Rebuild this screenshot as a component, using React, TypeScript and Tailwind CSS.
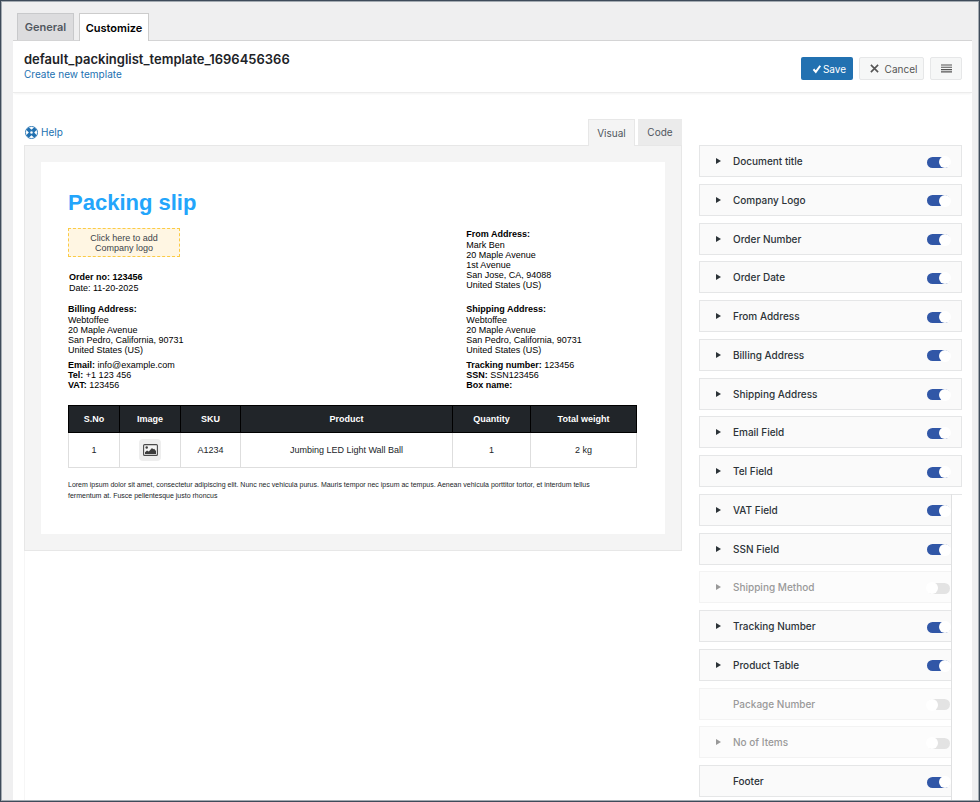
import { useState } from 'react';
import type { ReactNode } from 'react';

type Field = { name: string; enabled: boolean; expandable: boolean };

const FIELDS: Field[] = [
  { name: 'Document title', enabled: true, expandable: true },
  { name: 'Company Logo', enabled: true, expandable: true },
  { name: 'Order Number', enabled: true, expandable: true },
  { name: 'Order Date', enabled: true, expandable: true },
  { name: 'From Address', enabled: true, expandable: true },
  { name: 'Billing Address', enabled: true, expandable: true },
  { name: 'Shipping Address', enabled: true, expandable: true },
  { name: 'Email Field', enabled: true, expandable: true },
  { name: 'Tel Field', enabled: true, expandable: true },
  { name: 'VAT Field', enabled: true, expandable: true },
  { name: 'SSN Field', enabled: true, expandable: true },
  { name: 'Shipping Method', enabled: false, expandable: true },
  { name: 'Tracking Number', enabled: true, expandable: true },
  { name: 'Product Table', enabled: true, expandable: true },
  { name: 'Package Number', enabled: false, expandable: false },
  { name: 'No of Items', enabled: false, expandable: true },
  { name: 'Footer', enabled: true, expandable: false },
];

// Fields from this index on sit inside the narrower framed list.
const FRAME_START = 9;

function HelpIcon() {
  return (
    <svg viewBox="0 0 24 24" className="size-[13px]" aria-hidden="true">
      <circle cx="12" cy="12" r="11.2" fill="#fff" stroke="#2271b1" strokeWidth="1.6" />
      <g stroke="#2271b1" strokeWidth="7">
        <path d="M4.6 4.6l5.4 5.4M19.4 4.6L14 10M4.6 19.4L10 14M19.4 19.4L14 14" />
      </g>
      <circle cx="12" cy="12" r="3.6" fill="#fff" stroke="#2271b1" strokeWidth="2.4" />
    </svg>
  );
}

function CheckIcon() {
  return (
    <svg viewBox="0 0 20 20" className="size-[10px]" aria-hidden="true">
      <path d="M3 10.5l4.6 5.2L16.5 3.5" fill="none" stroke="#fff" strokeWidth="4" />
    </svg>
  );
}

function CrossIcon() {
  return (
    <svg viewBox="0 0 20 20" className="size-[9px]" aria-hidden="true">
      <path d="M2 2l16 16M18 2L2 18" fill="none" stroke="#555" strokeWidth="3.6" />
    </svg>
  );
}

function MenuIcon() {
  return (
    <svg viewBox="0 0 11 9" className="h-[9px] w-[11px]" aria-hidden="true">
      <path d="M0 1h11M0 3.3h11M0 5.6h11M0 7.9h11" stroke="#555" strokeWidth="1.1" />
    </svg>
  );
}

function ImageIcon() {
  return (
    <svg viewBox="0 0 15 12" className="h-[12px] w-[15px]" aria-hidden="true">
      <rect x="0.6" y="0.6" width="13.8" height="10.8" rx="1" fill="#f4f4f4" stroke="#4a4a4a" strokeWidth="1.1" />
      <circle cx="3.7" cy="3.5" r="1.2" fill="#3c3c3c" />
      <path d="M2 10V8.2l2-1.6 1.8 1L9 4l1.2 1.2.9-.4L13 7v3z" fill="#3c3c3c" />
    </svg>
  );
}

function Lines({ title, lines }: { title: string; lines: string[] }) {
  return (
    <div>
      <p className="mb-px font-bold">{title}</p>
      {lines.map((line) => (
        <p key={line}>{line}</p>
      ))}
    </div>
  );
}

function Pair({ label, children }: { label: string; children?: ReactNode }) {
  return (
    <p>
      <b>{label}</b> {children}
    </p>
  );
}

function FieldCard({ field, framed }: { field: Field; framed: boolean }) {
  const [on, setOn] = useState(field.enabled);
  const id = field.name.toLowerCase().replace(/ /g, '-');
  return (
    <div
      className={`flex h-8 items-center border-y border-l pl-[14px] ${framed ? 'pr-px' : 'border-r pr-[11px]'} ${
        on ? 'border-[#e5e6e7] bg-[#fafafa] text-[#2c3338]' : 'border-[#f3f3f3] bg-[#fcfcfc] text-[#999]'
      }`}
    >
      <span className="flex w-[19px]">
        {field.expandable && (
          <button type="button" aria-label={`Expand ${field.name}`} className="flex size-2 items-center justify-center">
            <svg viewBox="0 0 5 6" className="h-[6px] w-[5px]" fill="currentColor" aria-hidden="true">
              <path d="M0 0L5 3 0 6z" />
            </svg>
          </button>
        )}
      </span>
      <label htmlFor={id} className="flex-1 text-[10px] leading-4 font-medium">
        {field.name}
      </label>
      <input
        id={id}
        type="checkbox"
        checked={on}
        onChange={() => setOn(!on)}
        className="mt-[2px] flex h-[11px] w-[23px] appearance-none items-center rounded-full bg-[#e3e3e3] before:-mx-px before:size-3 before:shrink-0 before:rounded-full before:bg-white checked:justify-end checked:bg-[#3157a7]"
      />
    </div>
  );
}

export default function App() {
  return (
    <div className="flex min-h-screen flex-col border border-[#3e4b5a] bg-[#efeff0] font-['Inter',sans-serif] text-[#1d2327]">
      <div className="flex flex-1 flex-col border border-[#a3aab1] pt-[11px] pr-[6px] pl-[11px]">
        <nav className="flex gap-[5px] border-b border-[#d4d4d5] pl-1 text-[11px] leading-4 font-semibold">
          <button type="button" className="h-[27px] w-[57px] border border-b-0 border-[#c8c9cb] bg-[#dcdcde] text-[#50575e]">
            General
          </button>
          <button type="button" className="-mb-px h-[28px] w-[70px] border border-b-0 border-[#ccc] bg-white text-black">
            Customize
          </button>
        </nav>

        <header className="relative flex h-[52px] items-center justify-between border-b border-[#ececec] bg-white pt-1 pr-[10px] pl-[11px] shadow-[0_2px_2px_-1px_rgba(0,0,0,0.05)]">
          <div className="pb-[5px]">
            <h1 className="text-[13px] leading-4 font-semibold">default_packinglist_template_1696456366</h1>
            <a href="#new" className="block text-[10px] leading-[14px] text-[#2271b1]">
              Create new template
            </a>
          </div>
          <div className="flex gap-[6px] text-[10px] leading-4">
            <button type="button" className="flex h-[23px] w-[52px] items-center justify-center gap-px rounded-xs bg-[#2271b1] pl-1 text-white">
              <CheckIcon />
              Save
            </button>
            <button type="button" className="flex h-[23px] w-[65px] items-center justify-center gap-[6px] rounded-xs border border-[#e6e7e8] bg-[#f6f7f7] pl-1 text-[#555]">
              <CrossIcon />
              Cancel
            </button>
            <button type="button" aria-label="More options" className="flex h-[23px] w-8 items-center justify-center rounded-xs border border-[#e6e7e8] bg-[#f6f7f7]">
              <MenuIcon />
            </button>
          </div>
        </header>

        <main className="flex flex-1 gap-[17px] bg-white pt-[26px] pr-[10px] pl-[11px]">
          <section className="flex min-w-0 flex-1 flex-col">
            <div className="flex items-end justify-between">
              <a href="#help" className="flex h-[26px] items-center gap-[3px] pl-px text-[10px] leading-4 text-[#2271b1]">
                <HelpIcon />
                Help
              </a>
              <div className="flex gap-[3px] text-[10px] leading-4 text-[#50575e]">
                <button type="button" className="relative -mb-px h-[27px] w-[47px] border border-b-0 border-[#e7e7e7] bg-[#f4f4f4]">
                  Visual
                </button>
                <button type="button" className="h-[26px] w-11 bg-[#ebebeb]">
                  Code
                </button>
              </div>
            </div>

            <div className="border border-[#e7e7e7] bg-[#f4f4f4] p-4">
              <article className="bg-white pt-7 pr-7 pb-[33px] pl-[27px] font-['Liberation_Sans',Arial,sans-serif] text-[9px] leading-[10px] text-black">
                <h2 className="text-[22px] leading-[26px] font-bold text-[#23a5fb]">Packing slip</h2>

                <div className="mt-3 flex">
                  <div className="w-[70%]">
                    <button type="button" className="block h-[29px] w-28 border border-dashed border-[#fbcb45] bg-[#fff6e3] text-[#3c434a]">
                      Click here to add
                      <br />
                      Company logo
                    </button>
                    <div className="mt-[15px] pl-px">
                      <p className="mb-px font-bold">Order no: 123456</p>
                      <p>Date: 11-20-2025</p>
                    </div>
                  </div>
                  <div className="pt-px">
                    <Lines
                      title="From Address:"
                      lines={['Mark Ben', '20 Maple Avenue', '1st Avenue', 'San Jose, CA, 94088', 'United States (US)']}
                    />
                  </div>
                </div>

                <div className="mt-[11px] flex">
                  <div className="w-[70%]">
                    <Lines
                      title="Billing Address:"
                      lines={['Webtoffee', '20 Maple Avenue', 'San Pedro, California, 90731', 'United States (US)']}
                    />
                    <div className="mt-[5px]">
                      <Pair label="Email:">info@example.com</Pair>
                      <Pair label="Tel:">+1 123 456</Pair>
                      <Pair label="VAT:">123456</Pair>
                    </div>
                  </div>
                  <div>
                    <Lines
                      title="Shipping Address:"
                      lines={['Webtoffee', '20 Maple Avenue', 'San Pedro, California, 90731', 'United States (US)']}
                    />
                    <div className="mt-[5px]">
                      <Pair label="Tracking number:">123456</Pair>
                      <Pair label="SSN:">SSN123456</Pair>
                      <Pair label="Box name:" />
                    </div>
                  </div>
                </div>

                <table className="mt-[15px] w-full table-fixed border-collapse text-center text-[#212529]">
                  <thead className="bg-[#212529] text-white">
                    <tr className="h-[27px]">
                      <th className="w-[51px] border border-black">S.No</th>
                      <th className="w-[61px] border border-black">Image</th>
                      <th className="w-[60px] border border-black">SKU</th>
                      <th className="border border-black">Product</th>
                      <th className="w-[78px] border border-black">Quantity</th>
                      <th className="w-[106px] border border-black">Total weight</th>
                    </tr>
                  </thead>
                  <tbody>
                    <tr className="h-[35px]">
                      <td className="border border-[#dedede]">1</td>
                      <td className="border border-[#dedede]">
                        <span className="mx-auto flex size-[22px] items-center justify-center rounded bg-[#eee]">
                          <ImageIcon />
                        </span>
                      </td>
                      <td className="border border-[#dedede]">A1234</td>
                      <td className="border border-[#dedede]">Jumbing LED Light Wall Ball</td>
                      <td className="border border-[#dedede]">1</td>
                      <td className="border border-[#dedede]">2 kg</td>
                    </tr>
                  </tbody>
                </table>

                <p className="mt-[11px] text-[7px] leading-[11px] text-[#212529]">
                  Lorem ipsum dolor sit amet, consectetur adipiscing elit. Nunc nec vehicula purus. Mauris tempor nec ipsum ac tempus.
                  Aenean vehicula porttitor tortor, et interdum tellus
                  <br />
                  fermentum at. Fusce pellentesque justo rhoncus
                </p>
              </article>
            </div>
            <div className="flex-1 border-l border-[#f6f6f6]" />
          </section>

          <aside className="flex w-[263px] flex-col pt-[26px]">
            {FIELDS.map((field, i) => {
              const framed = i >= FRAME_START;
              return (
                <div key={field.name} className="flex min-h-[34px] flex-1 last:h-[35px] last:flex-none">
                  <div className={`flex-1 ${framed ? 'border-r border-[#e0e1e2]' : ''}`}>
                    <FieldCard field={field} framed={framed} />
                  </div>
                  {framed && <div className={`w-[10px] ${i === FRAME_START ? 'border-t border-[#e5e6e7]' : ''}`} />}
                </div>
              );
            })}
          </aside>
        </main>
      </div>
    </div>
  );
}
